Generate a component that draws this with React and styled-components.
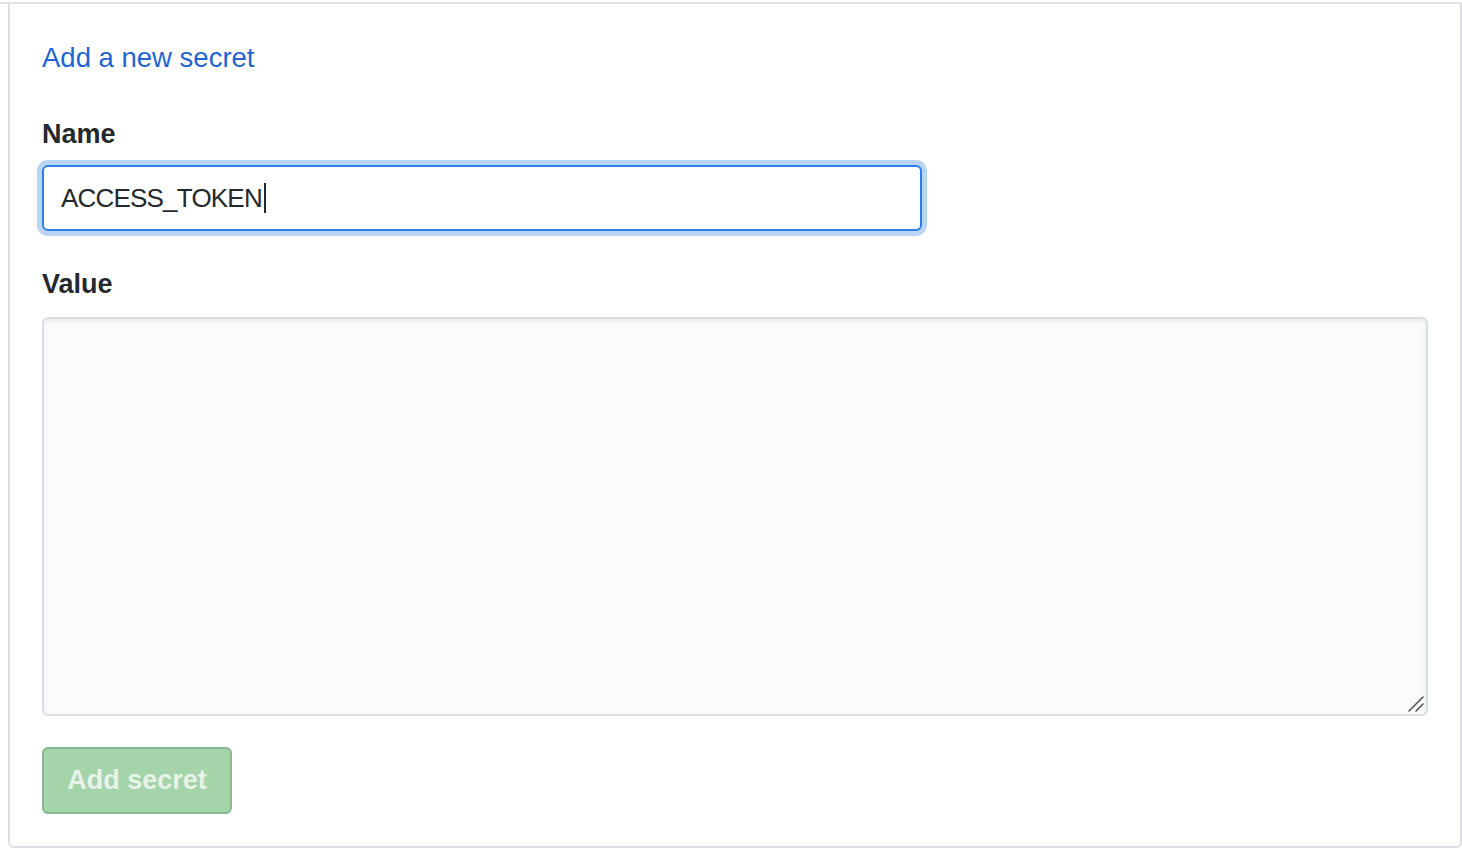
import React from 'react';
import styled, { createGlobalStyle } from 'styled-components';

const GlobalStyle = createGlobalStyle`
  html, body {
    margin: 0;
    padding: 0;
    background: #ffffff;
  }
  body {
    font-family: "Liberation Sans", Arial, sans-serif;
    color: #24292e;
  }
`;

const Page = styled.div`
  padding-top: 2px;
`;

const TopRule = styled.div`
  height: 2px;
  background: #e1e4e8;
`;

const Panel = styled.section`
  margin-left: 8px;
  border: 2px solid #dcdfe3;
  border-top: none;
  border-radius: 0 0 6px 6px;
  padding: 36px 32px 32px;
  display: flex;
  flex-direction: column;
`;

const Heading = styled.h3`
  margin: 0 0 40px;
  font-size: 27.5px;
  line-height: 36px;
  font-weight: 400;
  color: #1f66d1;
`;

const Label = styled.label`
  display: block;
  font-size: 27px;
  line-height: 36px;
  font-weight: 700;
  color: #24292e;
  margin-bottom: ${({ gap }) => gap}px;
`;

const Field = styled.div`
  box-sizing: border-box;
  width: 880px;
  height: 66px;
  margin-bottom: 35px;
  padding: 0 17px;
  display: flex;
  align-items: center;
  background: #ffffff;
  border: 2px solid #2f7fe8;
  border-radius: 6px;
  box-shadow: 0 0 0 5px rgba(3, 102, 214, 0.28);
  font-size: 26px;
  letter-spacing: -0.8px;
  color: #24292e;
`;

const Caret = styled.span`
  display: inline-block;
  width: 2px;
  height: 30px;
  margin-left: 2px;
  background: #24292e;
`;

const AreaWrap = styled.div`
  position: relative;
  margin-bottom: 31px;
`;

const ValueArea = styled.textarea`
  display: block;
  box-sizing: border-box;
  width: 100%;
  height: 399px;
  margin: 0;
  padding: 16px;
  background: #fafbfc;
  border: 2px solid #dadde1;
  border-radius: 6px;
  box-shadow: inset 0 2px 4px rgba(27, 31, 35, 0.075);
  font-family: inherit;
  font-size: 26px;
  outline: none;
  resize: none;
`;

const Grip = styled.svg`
  position: absolute;
  right: 3px;
  bottom: 3px;
  width: 18px;
  height: 18px;
  pointer-events: none;
`;

const SubmitButton = styled.button`
  box-sizing: border-box;
  align-self: flex-start;
  width: 190px;
  height: 67px;
  padding: 0;
  background: #a5d3aa;
  border: 2px solid #86b891;
  border-radius: 6px;
  font-family: inherit;
  font-size: 27px;
  font-weight: 700;
  color: rgba(255, 255, 255, 0.75);
  cursor: default;
`;

const App = () => {
  return (
    <Page>
      <GlobalStyle />
      <TopRule />
      <Panel>
        <Heading>Add a new secret</Heading>

        <Label gap={13}>Name</Label>
        <Field role="textbox">
          ACCESS_TOKEN
          <Caret />
        </Field>

        <Label gap={15}>Value</Label>
        <AreaWrap>
          <ValueArea aria-label="Value" />
          <Grip viewBox="0 0 18 18">
            <path d="M2 16 L16 2 M9 16 L16 9" stroke="#555" strokeWidth="1.6" strokeLinecap="round" />
          </Grip>
        </AreaWrap>

        <SubmitButton disabled>Add secret</SubmitButton>
      </Panel>
    </Page>
  );
};

export default App;
